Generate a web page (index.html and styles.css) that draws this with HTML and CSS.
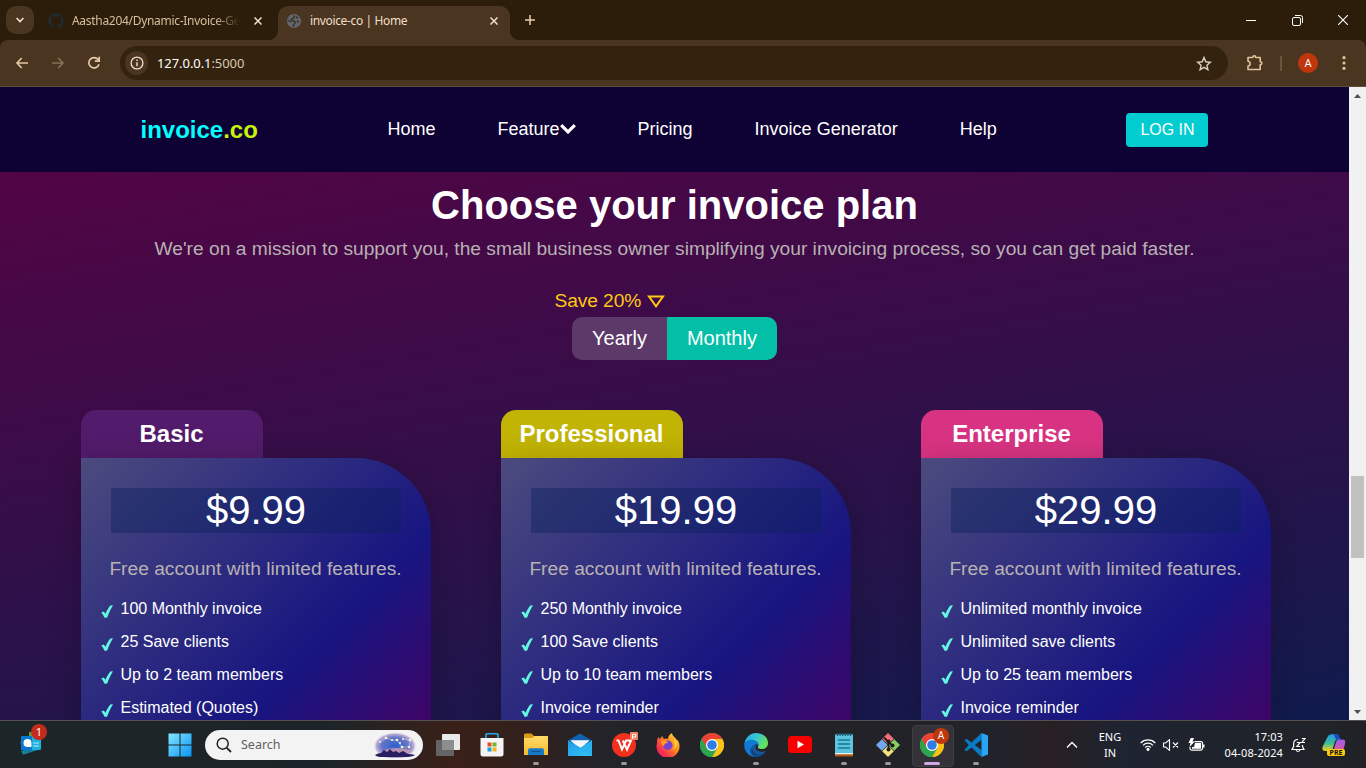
FILE: index.html
```html
<!DOCTYPE html>
<html lang="en">
<head>
<meta charset="utf-8">
<title>invoice-co | Home</title>
<link rel="stylesheet" href="styles.css">
</head>
<body>
<svg class="defs" width="0" height="0" aria-hidden="true">
  <defs>
    <linearGradient id="win" x1="0" y1="0" x2="1" y2="1"><stop offset="0" stop-color="#83e6fd"/><stop offset="1" stop-color="#0a94f5"/></linearGradient>
    <linearGradient id="fold" x1="0" y1="0" x2="0" y2="1"><stop offset="0" stop-color="#ffdc6c"/><stop offset="1" stop-color="#f7b92c"/></linearGradient>
    <linearGradient id="mail" x1="0" y1="0" x2="1" y2="1"><stop offset="0" stop-color="#1f9be8"/><stop offset="1" stop-color="#35c3f3"/></linearGradient>
    <linearGradient id="edge1" x1="0" y1="0" x2="1" y2=".4"><stop offset="0" stop-color="#2aa7e8"/><stop offset=".5" stop-color="#35c5d8"/><stop offset="1" stop-color="#66e05a"/></linearGradient>
    <linearGradient id="ff" x1="1" y1="0" x2="0" y2="1"><stop offset="0" stop-color="#fff04f"/><stop offset=".4" stop-color="#ff8a1f"/><stop offset=".75" stop-color="#f9304d"/><stop offset="1" stop-color="#e3188d"/></linearGradient>
    <linearGradient id="cop1" x1="0" y1="0" x2="0" y2="1"><stop offset="0" stop-color="#1f9dee"/><stop offset=".55" stop-color="#3fbf8f"/><stop offset="1" stop-color="#f1cf20"/></linearGradient>
    <linearGradient id="cop2" x1="0" y1="0" x2="0" y2="1"><stop offset="0" stop-color="#a05cf2"/><stop offset="1" stop-color="#f3587a"/></linearGradient>
    <radialGradient id="sky"><stop offset="0" stop-color="#2b62cf"/><stop offset=".6" stop-color="#6374c6"/><stop offset=".85" stop-color="#b9abd3"/><stop offset="1" stop-color="#f3f3f3" stop-opacity="0"/></radialGradient>
    <symbol id="tick" viewBox="0 0 12 13"><path d="M.2 7.600 2.800 6.500 4.500 8.800C5.900 5.600 7.500 2.700 9.300.6L12 .2C9.600 4 7.700 8.300 6.300 12.200Q4.700 13.300 3.300 12.400C2.500 10.400 1.500 8.900.2 7.600z" fill="#63f7e2"/></symbol>
    <symbol id="chrome" viewBox="0 0 24 24">
      <circle cx="12" cy="12" r="12" fill="#34a853"/>
      <path d="M12 12 1.600 6A12 12 0 0 1 22.400 6z" fill="#ea4335"/>
      <path d="M12 6h10.400A12 12 0 0 1 12 24l5.200-9z" fill="#fbc116"/>
      <path d="M1.600 6 6.800 15 12 12V6z" fill="#ea4335"/>
      <path d="M1.600 6A12 12 0 0 0 12 24l5.200-9H6.800z" fill="#2da44e"/>
      <circle cx="12" cy="12" r="6" fill="#fff"/><circle cx="12" cy="12" r="4.800" fill="#2f7de9"/>
    </symbol>
    <symbol id="close" viewBox="0 0 8 8"><path d="M.5.5l7 7M7.500.5l-7 7" stroke="currentColor" stroke-width="1.500"/></symbol>
  </defs>
</svg>

<header class="browser">
  <div class="tabstrip">
    <button class="tab-search"><svg width="8" height="6" viewBox="0 0 8 6" fill="none"><path d="M.6 1 4 4.500 7.400 1" stroke="#f1dfca" stroke-width="1.700"/></svg></button>
    <div class="tab">
      <svg width="16" height="16" viewBox="0 0 16 16"><path fill="#24292e" d="M8 0a8 8 0 0 0-2.530 15.590c.4.070.55-.17.55-.38v-1.490C3.800 14.200 3.330 12.650 3.330 12.650c-.36-.92-.89-1.170-.89-1.170-.73-.5.060-.48.060-.48.8.050 1.220.82 1.220.82.710 1.220 1.870.87 2.330.66.070-.52.280-.87.510-1.070-1.780-.2-3.640-.89-3.640-3.950 0-.88.310-1.590.82-2.150-.08-.2-.36-1.020.080-2.120 0 0 .67-.21 2.200.82a7.600 7.600 0 0 1 4 0c1.530-1.040 2.200-.82 2.200-.82.440 1.100.16 1.920.08 2.120.51.56.82 1.270.82 2.150 0 3.070-1.870 3.750-3.650 3.950.29.25.54.73.54 1.480v2.200c0 .21.150.46.550.38A8 8 0 0 0 8 0z"/></svg>
      <span class="tab-title muted">Aastha204/Dynamic-Invoice-Ge</span>
      <svg class="tab-close" width="8" height="8"><use href="#close"/></svg>
    </div>
    <div class="tab active">
      <svg width="14" height="14" viewBox="0 0 14 14"><circle cx="7" cy="7" r="7" fill="#62666b"/><path d="M7.500 1.300c-1 .8.300 1.600-.6 2.500C6 4.700 4.200 4.200 4.300 5.900c.1 1.400 3.600.6 3.900 2 .3 1.300-1.200 1.500-1.500 3-.1.900-.2 1.400-.8 1.800M1.300 6.500c.9.500 2.100.7 2.500 1.600M9.500 2.300c-.3 1 .5 1.500 1.500 1.700M11 6.500c-.7.800-.3 1.500.9 1.600" fill="none" stroke="#3b3127" stroke-width="1.500"/></svg>
      <span class="tab-title">invoice-co | Home</span>
      <svg class="tab-close" width="8" height="8"><use href="#close"/></svg>
    </div>
    <svg class="new-tab" width="10" height="10" viewBox="0 0 10 10"><path d="M5 0v10M0 5h10" stroke="#e6cfb1" stroke-width="1.500"/></svg>
    <div class="win-buttons">
      <svg width="10" height="10" viewBox="0 0 10 10"><path d="M0 5.500h10" stroke="#fff"/></svg>
      <svg width="11" height="11" viewBox="0 0 11 11" fill="none" stroke="#fff"><rect x=".5" y="2.500" width="8" height="8" rx="1.500"/><path d="M3 .5h5.500a2 2 0 0 1 2 2V8"/></svg>
      <svg width="10" height="10" viewBox="0 0 10 10"><path d="M0 0l10 10M10 0 0 10" stroke="#fff" stroke-width="1.100"/></svg>
    </div>
  </div>
  <div class="toolbar">
    <svg class="nav-icon" width="14" height="12" viewBox="0 0 14 12" fill="none" stroke="#e6c9a6" stroke-width="1.600"><path d="M13 6H2.500M6.700 1 2 6l4.700 5"/></svg>
    <svg class="nav-icon" width="14" height="12" viewBox="0 0 14 12" fill="none" stroke="#887057" stroke-width="1.600"><path d="M1 6h10.500M7.300 1 12 6l-4.700 5"/></svg>
    <svg class="nav-icon" width="14" height="14" viewBox="0 0 14 14" fill="none" stroke="#e6c9a6" stroke-width="1.700"><path d="M12 8.200A5.200 5.200 0 1 1 11 3.400l1 1.100"/><path d="M12.200.8v4.400H7.800" /></svg>
    <div class="omnibox">
      <span class="site-info"><svg width="14" height="14" viewBox="0 0 14 14"><circle cx="7" cy="7" r="5.900" fill="none" stroke="#f1dfca" stroke-width="1.300"/><path d="M7 6.200v4M7 3.600v1.500" stroke="#f1dfca" stroke-width="1.400"/></svg></span>
      <span class="url">127.0.0.1<span class="port">:5000</span></span>
      <svg class="star" width="16" height="15" viewBox="0 0 16 15"><path d="m8 1.500 1.800 4.300 4.500.4-3.400 3 1 4.500L8 11.300l-3.900 2.400 1-4.500-3.400-3 4.500-.4z" fill="none" stroke="#dccfbf" stroke-width="1.400"/></svg>
    </div>
    <svg class="ext" width="18" height="18" viewBox="0 0 18 18"><path d="M2 3.500h4.800C6.800 1.300 9.700 1.300 9.700 3.500h4.500v4.300c2.200 0 2.200 3 0 3v4.700H2v-3.500c2.800 0 2.800-4.800 0-4.800z" fill="none" stroke="#e0c29b" stroke-width="1.600" stroke-linejoin="round"/></svg>
    <span class="divider"></span>
    <span class="avatar">A</span>
    <svg class="menu-dots" width="4" height="14" viewBox="0 0 4 14" fill="#e0c29b"><circle cx="2" cy="1.700" r="1.600"/><circle cx="2" cy="7" r="1.600"/><circle cx="2" cy="12.300" r="1.600"/></svg>
  </div>
</header>

<div class="viewport">
  <div class="page">
    <nav class="navbar">
      <div class="logo">invoice<span>.co</span></div>
      <ul class="nav-links">
        <li>Home</li>
        <li>Feature<svg width="16" height="10" viewBox="0 0 16 10" fill="none"><path d="M1.200 1.200 8 7.900l6.800-6.700" stroke="#fff" stroke-width="3.200"/></svg></li>
        <li>Pricing</li><li>Invoice Generator</li><li>Help</li>
      </ul>
      <button class="login">LOG IN</button>
    </nav>
    <main class="pricing">
      <h1>Choose your invoice plan</h1>
      <p class="lead">We're on a mission to support you, the small business owner simplifying your invoicing process, so you can get paid faster.</p>
      <div class="save"><span>Save 20%</span><svg width="18" height="13" viewBox="0 0 18 13"><path d="M2 1.500h14L9 11.300z" fill="none" stroke="#fec814" stroke-width="2"/></svg></div>
      <div class="toggle"><span>Yearly</span><span class="on">Monthly</span></div>
      <div class="plans">
        <section class="plan">
          <h2 class="plan-name basic">Basic</h2>
          <div class="card">
            <div class="price">$9.99</div>
            <p class="note">Free account with limited features.</p>
            <ul>
              <li><svg><use href="#tick"/></svg>100 Monthly invoice</li>
              <li><svg><use href="#tick"/></svg>25 Save clients</li>
              <li><svg><use href="#tick"/></svg>Up to 2 team members</li>
              <li><svg><use href="#tick"/></svg>Estimated (Quotes)</li>
            </ul>
          </div>
        </section>
        <section class="plan">
          <h2 class="plan-name pro">Professional</h2>
          <div class="card">
            <div class="price">$19.99</div>
            <p class="note">Free account with limited features.</p>
            <ul>
              <li><svg><use href="#tick"/></svg>250 Monthly invoice</li>
              <li><svg><use href="#tick"/></svg>100 Save clients</li>
              <li><svg><use href="#tick"/></svg>Up to 10 team members</li>
              <li><svg><use href="#tick"/></svg>Invoice reminder</li>
            </ul>
          </div>
        </section>
        <section class="plan">
          <h2 class="plan-name ent">Enterprise</h2>
          <div class="card">
            <div class="price">$29.99</div>
            <p class="note">Free account with limited features.</p>
            <ul>
              <li><svg><use href="#tick"/></svg>Unlimited monthly invoice</li>
              <li><svg><use href="#tick"/></svg>Unlimited save clients</li>
              <li><svg><use href="#tick"/></svg>Up to 25 team members</li>
              <li><svg><use href="#tick"/></svg>Invoice reminder</li>
            </ul>
          </div>
        </section>
      </div>
    </main>
  </div>
  <div class="scrollbar">
    <svg width="7" height="4" viewBox="0 0 7 4"><path d="M0 4 3.500 0 7 4z" fill="#505050"/></svg>
    <span class="thumb"></span>
    <svg class="down" width="7" height="4" viewBox="0 0 7 4"><path d="M0 0 3.500 4 7 0z" fill="#505050"/></svg>
  </div>
</div>

<footer class="taskbar">
  <div class="widget">
    <svg width="22" height="24" viewBox="0 0 22 24"><path d="M9 1h10v9H9z" fill="#5aa13a"/><path d="m0 11 18-3 3 9-17 6z" fill="#0f6f94"/><path d="m1 20 20-2-18 5.800z" fill="#17819c"/><rect x="1" y="5" width="20" height="14" rx="1.500" fill="#1fb0de"/><path d="M1 6.500Q1 5 2.500 5H12v14H2.500Q1 19 1 17.500z" fill="#0877cf"/><path d="M7.500 8a4 4 0 0 1 4 4v4h-4a4 4 0 0 1 0-8z" fill="#fff"/><path d="M13.500 12h5.500M13.500 15h5.500" stroke="#bdeeff" stroke-width="1.200"/></svg>
    <span class="badge">1</span>
  </div>
  <div class="apps">
    <span class="app start"><svg width="24" height="24" viewBox="0 0 24 24"><path d="M.5.500h11v11H.5zM12.500.500h11v11h-11zM.5 12.500h11v11H.5zM12.500 12.500h11v11h-11z" fill="url(#win)"/></svg></span>
    <div class="search">
      <svg width="16" height="16" viewBox="0 0 16 16"><circle cx="6.700" cy="6.700" r="5.500" fill="none" stroke="#222" stroke-width="1.500"/><path d="m10.800 10.800 4.200 4.200" stroke="#222" stroke-width="1.800"/></svg>
      <span>Search</span>
      <svg class="scene" width="44" height="26" viewBox="0 0 44 26"><ellipse cx="22" cy="14" rx="22" ry="14" fill="url(#sky)"/><ellipse cx="24" cy="19" rx="13" ry="3" fill="#e3a1a7" opacity=".7"/><path d="M2 23q3-2 6-2l3-3 3 2 3-3 3 3 3-1 3 2 4-2 5 3q4 0 7 1-3 2-10 2H9q-5 0-7-2z" fill="#2a1f5e"/><path d="m7 10 6-4 6 2 5 0 5 7h7l1-7-7-1" fill="none" stroke="#cfd9ff" stroke-width=".5"/><g fill="#fff6bc"><circle cx="7" cy="10" r="1.100"/><circle cx="13" cy="6" r="1.300"/><circle cx="19" cy="8" r="1"/><circle cx="24" cy="8" r="1.300"/><circle cx="29" cy="15" r="1.300"/><circle cx="36" cy="15" r="1.200"/><circle cx="37" cy="8" r="1.200"/><circle cx="30" cy="7" r="1"/><circle cx="27" cy="11" r="1"/></g></svg>
    </div>
    <span class="app"><svg width="24" height="22" viewBox="0 0 24 22"><rect x="6" width="18" height="16" rx="1" fill="#e9e9e9"/><path d="M0 7q0-1 1-1h17v16H1q-1 0-1-1z" fill="#646464"/><path d="M6 6h12v10H6z" fill="#8d8d8d"/></svg></span>
    <span class="app"><svg width="24" height="24" viewBox="0 0 24 24"><path d="M6 6V2q0-1.300 1.300-1.300h9.400Q18 .7 18 2v4" fill="none" stroke="#22a7ea" stroke-width="1.700"/><path d="M.5 5h23v16q0 2.500-2.500 2.500H3Q.5 23.500.5 21z" fill="#f4f4f4"/><path fill="#e64a26" d="M7.500 9.500h4v4h-4z"/><path fill="#73b62a" d="M12.500 9.500h4v4h-4z"/><path fill="#19a0e6" d="M7.500 14.500h4v4h-4z"/><path fill="#f6b518" d="M12.500 14.500h4v4h-4z"/></svg></span>
    <span class="app run"><svg width="24" height="23" viewBox="0 0 24 23"><path d="M0 2Q0 .5 1.500.5h6L10 3h14v6H0z" fill="#d89b12"/><path d="M0 5h8l2.500-2H23q1 0 1 1v18H0z" fill="url(#fold)"/><path d="M4 22v-5q0-1.800 1.800-1.800h12.400Q20 15.200 20 17v5z" fill="#177bc5"/><path d="M7 18.500h10" stroke="#0d5590" stroke-width="1.300"/></svg></span>
    <span class="app"><svg width="24" height="23" viewBox="0 0 24 23"><path d="m0 7.500 12-7 12 7V12H0z" fill="#1261ad"/><path d="M2.500 7.500h19L12 16z" fill="#fff"/><path d="m0 7.500 13 7.300L24 7.500V23H0z" fill="url(#mail)"/><path d="m3 7.500 9 6.800 9-6.800z" fill="#f4f8fb"/><path d="m12 15 12 8H24V7.500z" fill="#2bb3ee"/></svg></span>
    <span class="app run"><svg width="28" height="27" viewBox="0 0 28 27"><circle cx="14" cy="14" r="12" fill="#f1301e"/><path d="M6.500 9.500h2L12 18.500l4-9h5l-4 9-4.200-9" fill="none" stroke="#fff" stroke-width="2"/><rect x="20" y="1" width="8" height="8" rx="1" fill="#f58263"/><path d="M22.500 8V3.300h3.300V6h-3.300" fill="none" stroke="#fff"/></svg></span>
    <span class="app"><svg width="24" height="24" viewBox="0 0 24 24"><path d="M2 4 4 6 6 3 8 6q2-1 4 0c0-3 2-5 4-6 .2 3 3 4 5 7 1.500 1 2.200 2.600 2.300 4.300A11.500 11.500 0 1 1 1 10Q1 6 2 4z" fill="url(#ff)"/><circle cx="11.800" cy="12.300" r="4.700" fill="#7543d3"/><path d="M5 8c3-1.500 6-.6 7 2-3 0-3.500 1-4 3-2 0-3-3-3-5z" fill="#ff9b22"/><path d="M17 7c3 4 2 8-1 10 4-1 6-5 4-9z" fill="#ffd33c"/></svg></span>
    <span class="app"><svg width="24" height="24"><use href="#chrome"/></svg></span>
    <span class="app run"><svg width="24" height="24" viewBox="0 0 24 24"><path d="M.5 12A11.800 11.800 0 0 1 12 0c7 0 12 4.500 12 10 0 4-3 6-6 6s-5-1-4-2.500C15.500 11 13 7.500 9 7.500 4 7.500 1 10 .5 12z" fill="url(#edge1)"/><path d="M.3 12C1 8 5 6 9 7c4 .5 6 4 5.500 6-1-2-4-2-6 .5-2 3-.5 8 3.500 10.400C5.500 24 0 19 .3 12z" fill="#0f7bd4"/><path d="M8.500 13c-2.500 4 .5 9 5.500 9 4 0 6.500-1.500 8-4C20 22 17 24 12.500 24 7 23 4 18 8.500 13z" fill="#0c4b93"/><path d="M8.500 13C6.500 18 11 22 15 21.800q4 0 7-3.800c-3 1.300-7 1-9.500-1-1.500-1.300-1-3 0-4-1-1.500-3-1.500-4 0z" fill="#14599f"/></svg></span>
    <span class="app"><svg width="24" height="17" viewBox="0 0 24 17"><rect width="24" height="17" rx="3.500" fill="#f60000"/><path d="m9.500 4.800 6.500 3.700-6.500 3.700z" fill="#fff"/></svg></span>
    <span class="app run"><svg width="20" height="25" viewBox="0 0 20 25"><path d="M1 22h18v2.500H1z" fill="#ad5a16"/><path d="M1 20h18v2.300H1z" fill="#efefef"/><path d="M1 2.500h18V21H1z" fill="#5cc3df"/><path d="M3.500 1v3M6.100 1v3M8.700 1v3M11.300 1v3M13.900 1v3M16.500 1v3" stroke="#16607e" stroke-width="1.200"/><path d="M4 8h12M4 12h12M4 16h12" stroke="#147796" stroke-width="1.700"/></svg></span>
    <span class="app run"><svg width="24" height="24" viewBox="0 0 24 24"><path d="m12 0 5.800 5.800L12 11.600 6.200 5.800z" fill="#f1707b"/><path d="m18.200 6.200 5.800 5.800-5.800 5.800-5.800-5.800z" fill="#89ce61"/><path d="m5.800 6.200 5.800 5.800-5.800 5.800L0 12z" fill="#72a8f2"/><path d="m12 12.400 5.800 5.800L12 24l-5.800-5.800z" fill="#f5e17b"/><path d="M8 4.500 12.500 9v8M12.500 9l4 3.500" stroke="#1c1c1c" stroke-width="1.800" fill="none"/><g fill="#1c1c1c"><circle cx="12.500" cy="8.500" r="2"/><circle cx="12.500" cy="16.500" r="2"/><circle cx="16.500" cy="12.500" r="2"/></g></svg></span>
    <span class="app run current"><svg width="24" height="24"><use href="#chrome"/></svg><b class="profile">A</b></span>
    <span class="app run"><svg width="24" height="24" viewBox="0 0 24 24"><path d="M17.500 0 7.500 9.500 2.500 5.700.3 7l4.500 5-4.500 5 2.200 1.300 5-3.800L17.500 24V17l-6.700-5 6.700-5z" fill="#087bc4"/><path d="M17.500 0 24 2.500v19L17.500 24z" fill="#2aa5f4"/></svg></span>
  </div>
  <div class="tray">
    <svg width="12" height="8" viewBox="0 0 12 8"><path d="m1 6.500 5-5 5 5" fill="none" stroke="#fff" stroke-width="1.400"/></svg>
    <span class="lang">ENG<br>IN</span>
    <svg width="16" height="13" viewBox="0 0 16 13" fill="none" stroke="#fff" stroke-width="1.200"><path d="M.7 5a10.300 10.300 0 0 1 14.600 0M3 7.300a7 7 0 0 1 10 0M5.200 9.500a4 4 0 0 1 5.600 0"/><circle cx="8" cy="11.300" r="1" fill="#fff"/></svg>
    <svg width="16" height="12" viewBox="0 0 16 12" fill="none" stroke="#fff" stroke-width="1.100"><path d="M.5 4h2.200L6.500.7v10.600L2.700 8H.5zM10 3.500l5 5M15 3.500l-5 5"/></svg>
    <svg width="17" height="14" viewBox="0 0 17 14"><path d="M6.500 3.600H13q1.500 0 1.500 1.500v5.500q0 1.500-1.500 1.500H3.500Q2 12.100 2 10.600V9" fill="none" stroke="#fff" stroke-width="1.200"/><path d="M7 5h6v5.700H4V9h2z" fill="#fff"/><path d="M15 6.500h1.500v3H15zM2.800 0 .5 5h2L1.500 9 6.800 3.500H4.500L6 0z" fill="#fff"/></svg>
    <span class="clock">17:03<br>04-08-2024</span>
    <svg class="bell" width="15" height="16" viewBox="0 0 15 16" fill="none" stroke="#fff" stroke-width="1.200"><path d="M7 2.500C4 2.500 2.600 4.500 2.600 7v2.500L1 12.500h12l-1.500-3V8M5 13q2 3 4 0M5.800 5.500h3.400l-3.400 4h3.400M10.800 1.500H14l-3.200 4H14"/></svg>
    <span class="copilot"><svg width="24" height="22" viewBox="0 0 24 22"><path d="M5.500 3Q6.500.3 9.500.3h5q2 0 2.800 2.700L18 5.500h-2.500q-2 0-2.700 2.300L10 17H3.500Q-.7 17 .7 12.500z" fill="url(#cop1)"/><path d="M14.500.3q2 0 2.800 2.700L18 5.500h-4L11.500.3z" fill="#174bc1"/><path d="M14 8q.7-2.500 3-2.500h3.500q3.500 0 2.500 4L21 18q-1 3-4 3H8.500q1.800-.5 2.500-3z" fill="url(#cop2)"/></svg><b>PRE</b></span>
  </div>
</footer>
</body>
</html>
```

FILE: styles.css
```css
* { box-sizing: border-box; margin: 0; padding: 0; }
body { width: 1366px; height: 768px; overflow: hidden; display: flex; flex-direction: column; font-family: "Liberation Sans", Arial, sans-serif; color: #fff; }
svg { display: block; flex: none; }
.defs { position: absolute; }
button { border: 0; font: inherit; color: inherit; }
ul { list-style: none; }

.browser { height: 87px; flex: none; background: #2c1d0a; font-family: "Noto Sans", sans-serif; color: #e6cfb1; }
.tabstrip { height: 40px; display: flex; align-items: center; padding-left: 6px; }
.tab-search { width: 28px; height: 28px; border-radius: 10px; background: #4a3620; display: grid; place-items: center; }
.tab { height: 34px; width: 230px; margin-top: 6px; padding: 0 4px 5px 12px; display: flex; align-items: center; font-size: 12px; margin-left: 2px; }
.tab-title { margin-left: 9px; white-space: nowrap; letter-spacing: -.36px; color: #f1dfca; }
.muted { margin-left: 8px; width: 168px; overflow: hidden; color: #d8bf9f; letter-spacing: -.3px; -webkit-mask-image: linear-gradient(90deg, #000 85%, transparent); mask-image: linear-gradient(90deg, #000 85%, transparent); }
.tab-close { margin-left: auto; color: #f1dfca; }
.tab.active { position: relative; width: 232px; margin-left: 12px; padding: 0 12px 5px 9px; background: #4a3620; border-radius: 10px 10px 0 0; }
.tab.active::before, .tab.active::after { content: ""; position: absolute; bottom: 0; width: 10px; height: 10px; }
.tab.active::before { left: -10px; background: radial-gradient(circle at 0 0, transparent 10px, #4a3620 10.500px); }
.tab.active::after { right: -10px; background: radial-gradient(circle at 100% 0, transparent 10px, #4a3620 10.500px); }
.new-tab { margin-left: 15px; }
.win-buttons { margin-left: auto; width: 138px; display: grid; grid-template-columns: repeat(3, 1fr); justify-items: center; align-items: center; }
.toolbar { height: 47px; background: #4a3620; border-bottom: 1px solid #5f4d3a; border-radius: 8px 8px 0 0; display: flex; align-items: center; padding-left: 15px; }
.nav-icon { margin-right: 22px; }
.nav-icon:nth-child(3) { margin-right: 19px; }
.omnibox { width: 1108px; height: 34px; border-radius: 17px; background: #33230e; display: flex; align-items: center; padding: 0 16px 0 5px; }
.site-info { width: 23px; height: 24px; border-radius: 50%; background: #4a3620; display: grid; place-items: center; }
.url { margin-left: 9px; font-size: 13px; letter-spacing: -.07px; color: #fff; }
.port { color: #d9c8b1; }
.star { margin-left: auto; }
.ext { margin-left: 18px; }
.divider { width: 2px; height: 15px; background: #6b563b; margin: 0 17px 0 16px; }
.avatar { width: 20px; height: 20px; border-radius: 50%; background: #bf360c; color: #fff; display: grid; place-items: center; font: 11px Roboto, sans-serif; margin-left: -1px; }
.menu-dots { margin-left: 24px; }

.viewport { height: 633px; flex: none; display: flex; overflow: hidden; }
.page { width: 1349px; }
.navbar { height: 85px; background: #0e0133; display: flex; align-items: center; padding-left: 140.500px; }
.logo { width: 247px; font-size: 24px; font-weight: bold; color: #0ff; }
.logo span { color: #c9f20b; }
.nav-links { display: flex; gap: 62px; font-size: 18px; line-height: 20px; width: 738.500px; padding-bottom: 2px; }
.nav-links li { display: flex; align-items: center; white-space: nowrap; }
.login { width: 82px; height: 34px; border-radius: 4px; background: #02cccf; font-size: 16px; padding-left: 1px; }
.pricing { height: 548px; overflow: hidden; background: linear-gradient(170deg, #520445 0%, #101b4d 100%); display: flex; flex-direction: column; align-items: center; padding-top: 10px; }
.pricing > * { flex: none; }
h1 { font-size: 40px; line-height: 46px; }
.lead { font-size: 19.200px; line-height: 22px; margin-top: 10px; color: #b8b1b4; white-space: nowrap; }
.save { display: flex; align-items: center; margin: 30px 130px 0 0; font-size: 19.200px; line-height: 22px; color: #fec814; }
.save span { width: 92px; letter-spacing: -.1px; }
.toggle { display: flex; margin-top: 5px; border-radius: 10px; overflow: hidden; font-size: 20px; line-height: 23px; background: #5d3969; }
.toggle span { padding: 10px 20px; }
.toggle .on { background: #03bfa8; }
.plans { display: flex; gap: 70px; width: 1190px; margin: 50px 0 0 3px; }
.plan { width: 350px; }
.plan-name { width: 182px; height: 48px; line-height: 48px; border-radius: 15px 15px 0 0; text-align: center; font-size: 24px; padding-right: 1px; }
.basic { background: #521b6b; }
.pro { background: #c2b404; }
.ent { background: #d83382; }
.card { height: 500px; padding: 30px 20px; border-radius: 0 75px 0 0; background: linear-gradient(135deg, #4c4b7e 0%, #171580 50%, #3e0567 72%, #520458 100%); box-shadow: 0 5px 30px rgba(0, 0, 0, .22); }
.price { margin: 0 10px; height: 45px; line-height: 45px; font-size: 40px; text-align: center; background: rgba(8, 33, 91, .4); }
.note { margin: 25px 1px 0 0; font-size: 19.200px; line-height: 22px; color: #b8b1b4; text-align: center; white-space: nowrap; }
.card ul { margin-top: 20px; }
.card li { height: 18px; margin-bottom: 15px; line-height: 18px; font-size: 16px; display: flex; }
.card li svg { width: 12px; height: 13px; margin: 5px 7.500px 0 0; }
.scrollbar { width: 17px; background: #f1f1f1; display: flex; flex-direction: column; align-items: center; padding: 7px 0 6px; }
.thumb { width: 13px; height: 82px; background: #c1c1c1; margin-top: 378px; }
.down { margin-top: auto; }

.taskbar { height: 48px; flex: none; border-top: 1px solid #565150; display: flex; align-items: center; font-family: "Noto Sans", sans-serif; background: linear-gradient(90deg, #1c2528 0, #1d2429 330px, #3a2018 450px, #34201b 510px, #22242a 610px, #232225 720px, #21232a 1000px, #281f23 1050px, #1e2430 1120px, #202226 1366px); }
.widget { position: relative; width: 158px; padding: 0 0 4px 20px; }
.badge { position: absolute; left: 31px; top: -7px; width: 16px; height: 16px; border-radius: 50%; background: #c42b1c; font-size: 11px; line-height: 16px; text-align: center; }
.apps { display: flex; align-items: center; }
.app { width: 44px; height: 46px; display: grid; place-items: center; position: relative; }
.start { padding-right: 1px; }
.run::after { content: ""; position: absolute; bottom: 3px; left: 19px; width: 6px; height: 3px; border-radius: 2px; background: #999; }
.search { width: 218px; height: 30px; margin: 0 3px; background: #f3f3f3; border-radius: 15px; display: flex; align-items: center; padding: 0 6px 0 11px; color: #606060; font-size: 12.500px; }
.search span { margin-left: 9px; }
.scene { margin: 0 0 0 auto; }
.current::before { content: ""; position: absolute; left: 2px; top: 3px; width: 40px; height: 40px; border-radius: 4px; background: #343238; border: 1px solid #3f3d42; }
.current svg { position: relative; }
.current::after { left: 14px; width: 16px; background: #cfa8e6; }
.profile { position: absolute; left: 23px; top: 6px; width: 16px; height: 16px; border-radius: 50%; background: #bf360c; font: 10px/16px Roboto, sans-serif; text-align: center; }
.tray { display: grid; grid-template-columns: 18px 58px 18px 28px 22px 76px 30px 42px; width: 303px; margin-left: 65px; align-items: center; justify-items: center; font-size: 11px; line-height: 16px; text-align: center; white-space: nowrap; }
.clock { justify-self: end; text-align: right; letter-spacing: .1px; }
.copilot { position: relative; }
.copilot b { position: absolute; left: 5px; top: 15px; width: 18px; height: 7px; border-radius: 2px; background: #fdc80c; color: #111; font-size: 7px; line-height: 7px; }
```
